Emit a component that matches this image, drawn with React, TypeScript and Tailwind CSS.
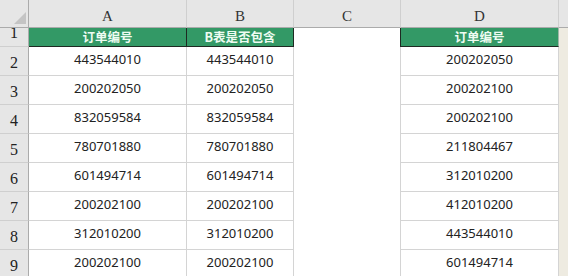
import React from "react";

const rows = [
  ["443544010", "443544010", "200202050"],
  ["200202050", "200202050", "200202100"],
  ["832059584", "832059584", "200202100"],
  ["780701880", "780701880", "211804467"],
  ["601494714", "601494714", "312010200"],
  ["200202100", "200202100", "412010200"],
  ["312010200", "312010200", "443544010"],
  ["200202100", "200202100", "601494714"],
];

const serif = { fontFamily: '"Liberation Serif", "DejaVu Serif", serif' };
const cellFont = { fontFamily: '"Noto Sans", "Noto Sans CJK SC", sans-serif' };

function ColHead({ label }: { label: string }) {
  return (
    <div
      className="flex items-center justify-center pt-[5px] border-r border-b border-r-[#cfcfcf] border-b-[#ababab] bg-[#e6e6e6] text-[15px] text-[#333]"
      style={serif}
    >
      {label}
    </div>
  );
}

function RowHead({ n, tall }: { n: number; tall?: boolean }) {
  return (
    <div
      className={`flex items-end justify-center border-r border-b border-r-[#ababab] border-b-[#cfcfcf] bg-[#e6e6e6] text-[16px] text-[#222] ${tall ? "pb-[1px]" : "pb-0"}`}
      style={serif}
    >
      {n}
    </div>
  );
}

function GreenHead({ text, dark = true }: { text: string; dark?: boolean }) {
  return (
    <div
      className={`flex items-center justify-center bg-[#339966] border-b border-b-[#1e2a22] border-r ${dark ? "border-r-[#1e2a22]" : "border-r-[#9fb7a8]"} text-[12.5px] font-bold text-[#eefcf2]`}
      style={{ fontFamily: '"Noto Sans CJK SC", "Noto Sans", sans-serif' }}
    >
      {text}
    </div>
  );
}

function Num({ v }: { v: string }) {
  return (
    <div
      className="flex items-center justify-center pb-[2px] border-r border-b border-[#d4d4d4] bg-white text-[13px] text-[#222]"
      style={cellFont}
    >
      {v}
    </div>
  );
}

export default function App() {
  return (
    <div className="w-[568px] h-[276px] overflow-hidden bg-[#eeebe1]">
      <div className="grid grid-cols-[29px_158px_107px_107px_158px_9px] grid-rows-[28px_19px_repeat(8,29px)]">
        {/* corner */}
        <div className="relative border-r border-b border-r-[#ababab] border-b-[#ababab] bg-[#e6e6e6]">
          <svg className="absolute right-[2px] bottom-[3px]" width="12" height="12" viewBox="0 0 12 12">
            <polygon points="12,0 12,12 0,12" fill="#c4c4c4" />
          </svg>
        </div>
        <ColHead label="A" />
        <ColHead label="B" />
        <ColHead label="C" />
        <ColHead label="D" />
        <div className="border-b border-b-[#ababab] bg-[#e6e6e6]" />

        {/* row 1 */}
        <RowHead n={1} tall />
        <GreenHead text="订单编号" />
        <GreenHead text="B表是否包含" />
        <div className="bg-white border-r border-r-[#1e2a22]" />
        <GreenHead text="订单编号" dark={false} />
        <div className="bg-[#eeebe1]" />

        {rows.map((r, i) => (
          <React.Fragment key={i}>
            <RowHead n={i + 2} />
            <Num v={r[0]} />
            <Num v={r[1]} />
            <div className="bg-white border-r border-[#d4d4d4]" />
            <Num v={r[2]} />
            <div className="bg-[#eeebe1]" />
          </React.Fragment>
        ))}
      </div>
    </div>
  );
}
